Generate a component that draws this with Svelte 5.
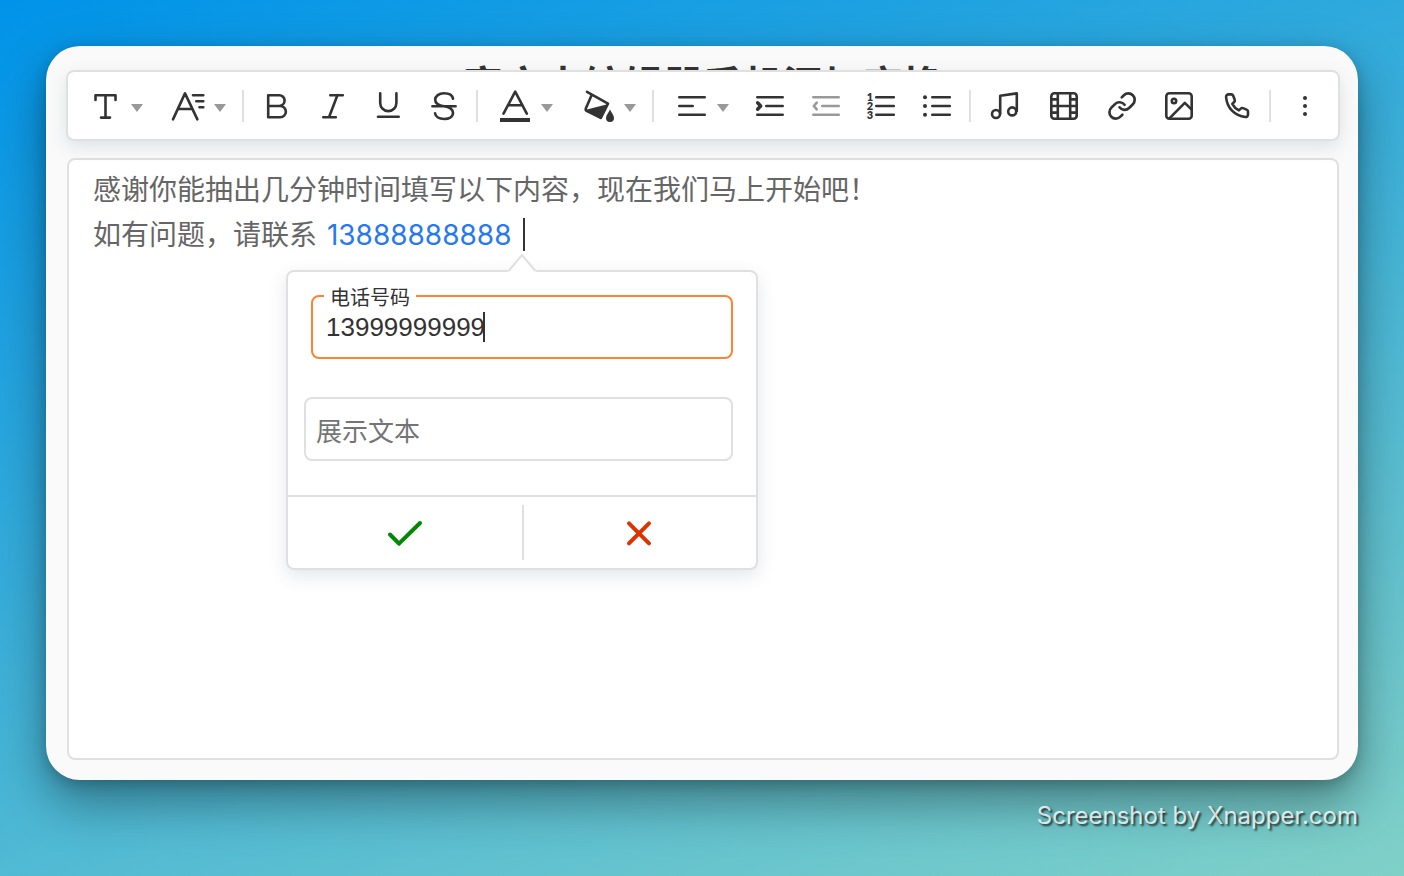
<script>
  let phone = $state('13999999999');
  let label = $state('');

  const rows = [7.3, 16, 24.7];

  const groups = [
    [
      { id: 'font', name: '字体', menu: true },
      { id: 'size', name: '字号', menu: true },
    ],
    [
      { id: 'bold', name: '粗体' },
      { id: 'italic', name: '斜体' },
      { id: 'underline', name: '下划线' },
      { id: 'strike', name: '删除线' },
    ],
    [
      { id: 'color', name: '文字颜色', menu: true },
      { id: 'fill', name: '背景颜色', menu: true },
    ],
    [
      { id: 'align', name: '对齐', menu: true },
      { id: 'indent', name: '增加缩进' },
      { id: 'outdent', name: '减少缩进', off: true },
      { id: 'ordered', name: '有序列表' },
      { id: 'bullets', name: '无序列表' },
    ],
    [
      { id: 'music', name: '音频', wide: true },
      { id: 'film', name: '视频', wide: true },
      { id: 'link', name: '链接', wide: true },
      { id: 'image', name: '图片', wide: true },
      { id: 'phone', name: '电话', wide: true },
    ],
    [{ id: 'more', name: '更多', wide: true }],
  ];
</script>

{#snippet icon(id)}
  <svg class="icon" viewBox="0 0 32 32" aria-hidden="true">
    {#if id === 'font'}
      <path d="M6.5 10V5.2H26.5V10M16.5 5.2V27.6M12 27.6H21" />
    {:else if id === 'size'}
      <path d="M1 29.4L13 3.4L25.4 29.4M6 19H20.5M21 5.2H31.3M24.3 11.3H31.3M27.5 17.3H31.3" />
    {:else if id === 'bold'}
      <path d="M8.2 5.2H19.2A5.4 5.4 0 0 1 19.2 16H8.2ZM8.2 16H20.2A5.6 5.6 0 0 1 20.2 27.3H8.2Z" />
    {:else if id === 'italic'}
      <path d="M14.3 5.2H26.8M7.3 27.2H19.8M21.4 5.2L13 27.2" />
    {:else if id === 'underline'}
      <path d="M8.2 3.4V13A8 8 0 0 0 24.4 13V3.4M6 26.7H26.7" />
    {:else if id === 'strike'}
      <path d="M4.4 16.3H27.6M25 8.7C24.4 5.2 20.6 3.3 16 3.3C11 3.3 7.2 5.9 7.2 9.8C7.2 13.6 10.4 15.4 16 16.3C21.6 17.2 25 19 25 22.8C25 26.7 21.2 29 16.2 29C11.2 29 7.4 26.8 7 23.2" />
    {:else if id === 'color'}
      <path d="M4.5 23.7L16.2 1.7L27.8 23.7M8.8 15.2H23.5" />
      <path class="solid" d="M1 28H31V32H1Z" />
    {:else if id === 'fill'}
      <path d="M5 1.8L26 13.6L18.8 27.8L5 21.2Q3.2 20.2 3.8 18.6L9.8 4.8" />
      <path class="solid" d="M3 20L26.5 14L19 29.2Z" />
      <path class="solid" d="M28 19.5C29 22.4 32 24.9 32 28A4 4 0 0 1 24 28C24 24.9 27 22.4 28 19.5Z" />
    {:else if id === 'align'}
      <path d="M4.3 7.3H29.7M4.3 16H17.7M4.3 24.7H29.7" />
    {:else if id === 'indent'}
      <path d="M4.3 7.3H29.7M13.3 16H29.7M4.3 24.7H29.7" />
      <path class="bold" d="M4.6 12.8L7.7 16L4.6 19.2" />
    {:else if id === 'outdent'}
      <path d="M4.3 7.3H29.7M13.3 16H29.7M4.3 24.7H29.7" />
      <path d="M7.8 12.6L4.8 16L7.8 19.4" />
    {:else if id === 'ordered'}
      <path d="M11.3 7.3H28.8M11.3 16H28.8M11.3 24.7H28.8" />
      {#each rows as y, i}
        <text x="5" y={y + 4}>{i + 1}</text>
      {/each}
    {:else if id === 'bullets'}
      <path d="M11.3 7.3H28.8M11.3 16H28.8M11.3 24.7H28.8" />
      {#each rows as y}
        <circle class="solid" cx="4" cy={y} r="2" />
      {/each}
    {:else if id === 'music'}
      <circle cx="8" cy="24" r="4" />
      <circle cx="24.2" cy="21.4" r="4" />
      <path d="M12.2 23.4V5.8L28.8 3.4V21" />
    {:else if id === 'film'}
      <rect x="5.3" y="3.3" width="25.4" height="25.4" rx="3" />
      <path d="M11.8 3.3V28.7M24.2 3.3V28.7M5.3 16H30.7M5.3 9.4H11.8M5.3 22.6H11.8M24.2 9.4H30.7M24.2 22.6H30.7" />
    {:else if id === 'link'}
      <g transform="translate(2.8 .8) scale(1.27)" stroke-width="2.1">
        <path d="M10 13a5 5 0 0 0 7.54.54l3-3a5 5 0 0 0-7.07-7.07l-1.72 1.71" />
        <path d="M14 11a5 5 0 0 0-7.54-.54l-3 3a5 5 0 0 0 7.07 7.07l1.71-1.71" />
      </g>
    {:else if id === 'image'}
      <rect x="4.3" y="3.3" width="25.4" height="25.4" rx="3" />
      <circle cx="12" cy="11" r="2.2" />
      <path d="M7.4 28.4L22.8 12.8L29.4 19.4" />
    {:else if id === 'phone'}
      <path d="M8.6 4.4H11.2C12.2 4.4 12.9 4.9 13.2 5.8L14.7 9.8C15 10.7 14.8 11.4 14.2 12L12.3 13.9C13.7 16.7 16 19 18.9 20.4L20.8 18.6C21.4 18 22.2 17.8 23 18.1L26.6 19.6C27.5 20 28 20.7 28 21.6V24.6C28 26.1 26.8 27.2 25.3 27C14.6 25.8 7 18 6.1 7.1C6 5.6 7.1 4.4 8.6 4.4Z" />
    {:else if id === 'more'}
      {#each [8, 16, 24] as y}
        <circle class="solid" cx="17" cy={y} r="2" />
      {/each}
    {/if}
  </svg>
{/snippet}

<div class="page">
  <main class="card">
    <h1>富文本编辑器手机添加变换</h1>

    <div class="toolbar" role="toolbar" aria-label="格式">
      {#each groups as group}
        <div class="group">
          {#each group as tool}
            <button
              type="button"
              class="tool"
              class:menu={tool.menu}
              class:wide={tool.wide}
              disabled={tool.off}
              aria-label={tool.name}
            >
              {@render icon(tool.id)}
              {#if tool.menu}
                <svg class="caret" viewBox="0 0 12 8" aria-hidden="true"><path d="M0 0H12L6 8Z" /></svg>
              {/if}
            </button>
          {/each}
        </div>
      {/each}
    </div>

    <section class="editor">
      <p>感谢你能抽出几分钟时间填写以下内容，现在我们马上开始吧！</p>
      <p>如有问题，请联系 <a href="tel:13888888888">13888888888</a> <span class="cursor"></span></p>

      <form class="popover" onsubmit={(e) => e.preventDefault()}>
        <svg class="arrow" viewBox="0 0 32 19" aria-hidden="true">
          <path d="M1 19L2.5 18L16 2L29.5 18L31 19Z" class="arrow-fill" />
          <path d="M2.5 18L16 2L29.5 18" class="arrow-line" />
        </svg>
        <div class="fields">
          <div class="field active">
            <label for="phone">电话号码</label>
            <input id="phone" type="text" bind:value={phone} />
            <span class="cursor typed"></span>
          </div>
          <div class="field">
            <input type="text" aria-label="展示文本" placeholder="展示文本" bind:value={label} />
          </div>
        </div>
        <div class="actions">
          <button type="submit" class="ok" aria-label="确定">
            <svg viewBox="0 0 36 28" aria-hidden="true"><path d="M3 15.5L12 24.7L33 4" /></svg>
          </button>
          <button type="button" class="cancel" aria-label="取消">
            <svg viewBox="0 0 36 28" aria-hidden="true"><path d="M7 4.3L27 24.3M27 4.3L7 24.3" /></svg>
          </button>
        </div>
      </form>
    </section>
  </main>
  <footer>Screenshot by Xnapper.com</footer>
</div>

<style>
  :global(body) {
    margin: 0;
  }
  .page {
    box-sizing: border-box;
    min-height: 100vh;
    display: flex;
    flex-direction: column;
    padding: 46px 46px 0;
    background: linear-gradient(160deg, #0093e9 0%, #80d0c7 100%);
    font-family: Inter, 'Noto Sans CJK SC', sans-serif;
    color: #333;
  }
  .card {
    flex: 1;
    display: flex;
    flex-direction: column;
    padding: 0 18px 20px 20px;
    border-radius: 34px;
    background: #fafafa;
    box-shadow:
      0 4px 14px rgba(0, 0, 0, 0.2),
      0 22px 50px rgba(0, 0, 0, 0.38);
  }
  h1 {
    margin: 0 0 -36px;
    padding-top: 20px;
    font-size: 40px;
    line-height: 40px;
    font-weight: 700;
    text-align: center;
  }
  button {
    border: 0;
    padding: 0;
    background: none;
    color: inherit;
    cursor: pointer;
  }
  .toolbar {
    position: relative;
    z-index: 1;
    display: flex;
    padding: 2px 0 1px;
    border: 2px solid #e0e0e0;
    border-radius: 8px;
    background: #fff;
    box-shadow: 0 6px 18px rgba(50, 60, 90, 0.13);
  }
  .group {
    display: flex;
    align-items: center;
    padding: 0 4px;
  }
  .group + .group::before {
    content: '';
    width: 2px;
    height: 32px;
    margin: 0 4px 0 -4px;
    background: #e0e0e0;
  }
  .tool {
    display: flex;
    align-items: center;
    justify-content: center;
    width: 56px;
    height: 64px;
  }
  .tool.wide {
    width: 58px;
  }
  .tool.menu {
    width: 83px;
    gap: 10px;
    justify-content: flex-start;
    padding-left: 17px;
  }
  .tool:disabled {
    color: #999;
  }
  .icon {
    flex: none;
    width: 32px;
    height: 32px;
    overflow: visible;
    fill: none;
    stroke: currentColor;
    stroke-width: 2.6;
    stroke-linecap: round;
    stroke-linejoin: round;
  }
  .icon .solid {
    fill: currentColor;
    stroke: none;
  }
  .icon .bold {
    stroke-width: 3.4;
  }
  .icon text {
    fill: currentColor;
    stroke: none;
    font: 800 11px Lato, sans-serif;
    text-anchor: middle;
  }
  .caret {
    flex: none;
    width: 12px;
    height: 8px;
    margin-top: 4px;
    fill: #999;
  }
  .editor {
    position: relative;
    flex: 1;
    margin: 17px 1px 0;
    padding: 8px 24px;
    border: 2px solid #e0e0e0;
    border-radius: 8px;
    background: #fff;
    font-size: 28px;
    line-height: 45px;
    color: #666;
  }
  p {
    margin: 0;
  }
  a {
    padding: 0 4px 0 2px;
    color: #2878f0;
    text-decoration: none;
  }
  .cursor {
    display: inline-block;
    width: 2px;
    height: 33px;
    vertical-align: -6px;
    background: #333;
  }
  .popover {
    position: absolute;
    top: 110px;
    left: 217px;
    box-sizing: border-box;
    width: 472px;
    border: 2px solid #e0e0e0;
    border-radius: 8px;
    background: #fff;
    box-shadow: 0 6px 18px rgba(50, 60, 90, 0.13);
    color: #333;
  }
  .arrow {
    position: absolute;
    left: 218px;
    top: -19px;
    width: 32px;
    height: 19px;
  }
  .arrow-fill {
    fill: #fff;
  }
  .arrow-line {
    fill: none;
    stroke: #e0e0e0;
    stroke-width: 2;
  }
  .fields {
    display: flex;
    flex-direction: column;
    gap: 38px;
    padding: 23px 23px 34px 16px;
  }
  .field {
    position: relative;
  }
  .field.active {
    margin-left: 7px;
  }
  input {
    display: block;
    box-sizing: border-box;
    width: 100%;
    height: 64px;
    padding: 6px 10px 0;
    border: 2px solid #e0e0e0;
    border-radius: 8px;
    outline: none;
    background: #fff;
    color: #333;
    font: 26px 'Liberation Sans', 'Noto Sans CJK SC', sans-serif;
  }
  input::placeholder {
    color: #757575;
    opacity: 1;
  }
  .active input {
    padding: 0 13px;
    border-color: #fd8433;
  }
  label {
    position: absolute;
    left: 13px;
    top: -10px;
    padding: 0 6px;
    background: #fff;
    font-size: 20px;
    line-height: 26px;
  }
  .typed {
    position: absolute;
    left: 172px;
    top: 17px;
    height: 30px;
  }
  .actions {
    display: grid;
    grid-template-columns: 1fr 1fr;
    border-top: 2px solid #e0e0e0;
    padding: 8px 0;
  }
  .actions button {
    display: flex;
    align-items: center;
    justify-content: center;
    height: 55px;
  }
  .actions svg {
    width: 36px;
    height: 28px;
    fill: none;
    stroke: currentColor;
    stroke-width: 4;
    stroke-linecap: round;
    stroke-linejoin: round;
  }
  .actions .ok {
    color: #008a00;
  }
  .actions .cancel {
    color: #dd3300;
    border-left: 2px solid #e0e0e0;
  }
  footer {
    padding: 18px 0 42px;
    font-size: 24px;
    line-height: 36px;
    font-weight: 400;
    text-align: right;
    color: rgba(255, 255, 255, 0.8);
    text-shadow: 2px 2px 2px rgba(0, 0, 0, 0.7);
  }
</style>
